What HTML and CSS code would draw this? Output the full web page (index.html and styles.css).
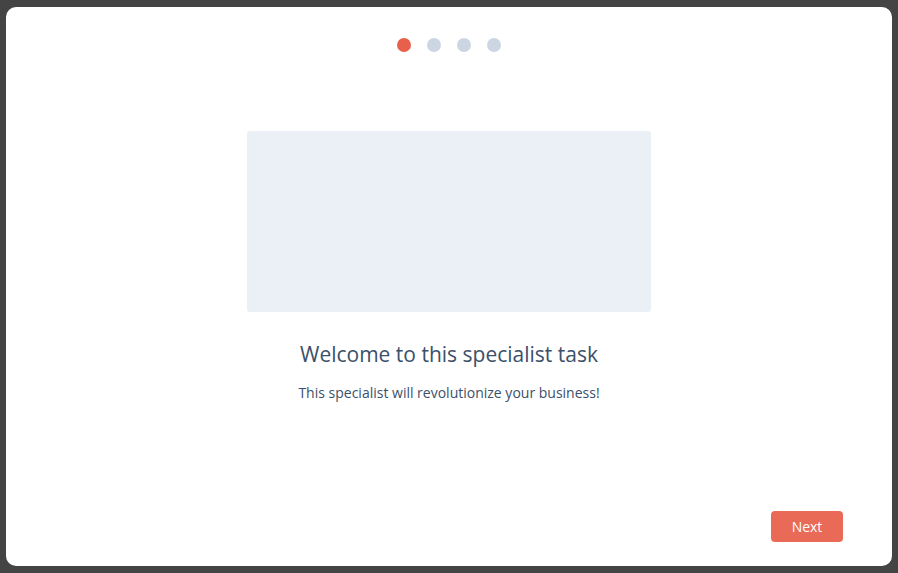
FILE: index.html
```html
<!DOCTYPE html>
<html>
<head>
<meta charset="utf-8">
<link rel="stylesheet" href="styles.css">
</head>
<body>
<div class="card">
  <div class="dots">
    <span class="dot active"></span>
    <span class="dot"></span>
    <span class="dot"></span>
    <span class="dot"></span>
  </div>
  <div class="hero"></div>
  <h1 class="title">Welcome to this specialist task</h1>
  <p class="subtitle">This specialist will revolutionize your business!</p>
  <div class="footer">
    <button class="next">Next</button>
  </div>
</div>
</body>
</html>
```
FILE: styles.css
```css
html, body {
  margin: 0;
  padding: 0;
  background: #444444;
  height: 100%;
}
body {
  padding: 7px 6px;
  box-sizing: border-box;
  font-family: "Open Sans", "Liberation Sans", sans-serif;
  color: #33475b;
}
.card {
  background: #ffffff;
  border-radius: 10px;
  height: 559px;
  width: 886px;
  box-sizing: border-box;
  display: flex;
  flex-direction: column;
  align-items: center;
  padding-top: 31px;
}
.dots {
  display: flex;
  gap: 16px;
  height: 14px;
}
.dot {
  width: 14px;
  height: 14px;
  border-radius: 50%;
  background: #cbd6e2;
}
.dot.active {
  background: #e8604c;
}
.hero {
  width: 404px;
  height: 181px;
  background: #eaf0f6;
  border-radius: 3px;
  margin-top: 79px;
}
.title {
  font-size: 21px;
  font-weight: 400;
  margin: 30px 0 0;
  line-height: 24px;
  color: #3b5069;
}
.subtitle {
  font-size: 14px;
  margin: 17px 0 0;
  line-height: 20px;
  color: #3b5069;
}
.footer {
  margin-top: auto;
  align-self: stretch;
  display: flex;
  justify-content: flex-end;
  padding: 0 49px 24px 0;
}
.next {
  width: 72px;
  height: 31px;
  border: none;
  border-radius: 4px;
  background: #ea6a58;
  color: #ffffff;
  font-family: inherit;
  font-size: 14px;
  padding: 0;
}
```
